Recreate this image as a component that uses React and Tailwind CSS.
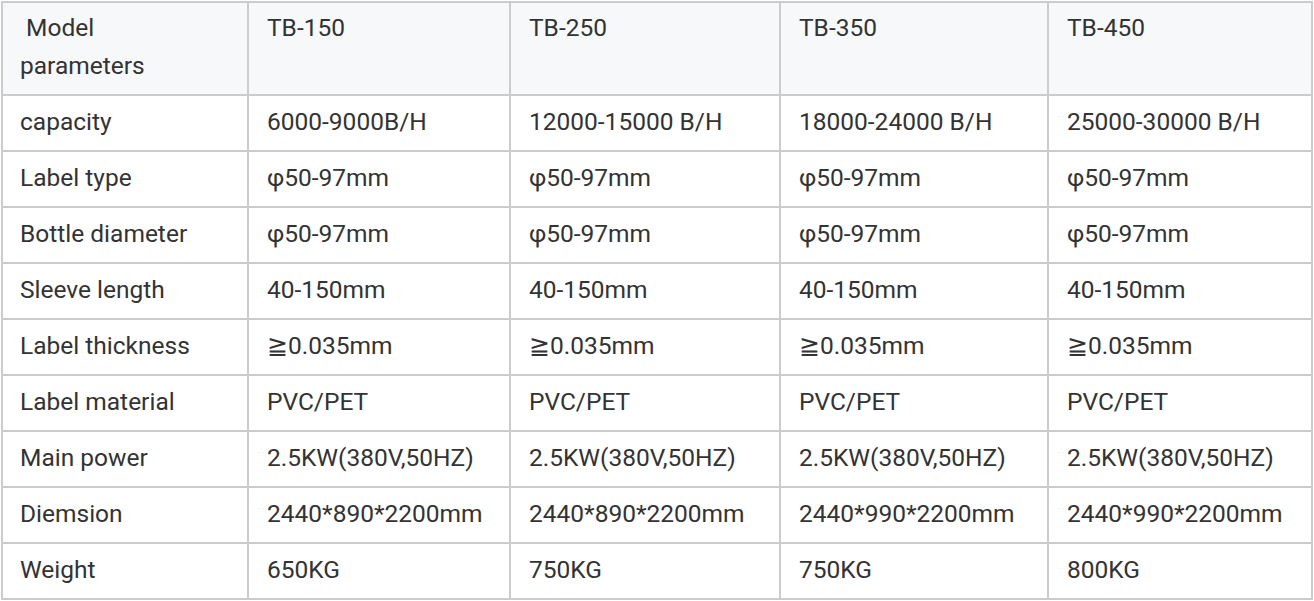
import React from "react";

const models = ["TB-150", "TB-250", "TB-350", "TB-450"];

const rows = [
  ["capacity", "6000-9000B/H", "12000-15000 B/H", "18000-24000 B/H", "25000-30000 B/H"],
  ["Label type", "φ50-97mm", "φ50-97mm", "φ50-97mm", "φ50-97mm"],
  ["Bottle diameter", "φ50-97mm", "φ50-97mm", "φ50-97mm", "φ50-97mm"],
  ["Sleeve length", "40-150mm", "40-150mm", "40-150mm", "40-150mm"],
  ["Label thickness", "≧0.035mm", "≧0.035mm", "≧0.035mm", "≧0.035mm"],
  ["Label material", "PVC/PET", "PVC/PET", "PVC/PET", "PVC/PET"],
  ["Main power", "2.5KW(380V,50HZ)", "2.5KW(380V,50HZ)", "2.5KW(380V,50HZ)", "2.5KW(380V,50HZ)"],
  ["Diemsion", "2440*890*2200mm", "2440*890*2200mm", "2440*990*2200mm", "2440*990*2200mm"],
  ["Weight", "650KG", "750KG", "750KG", "800KG"],
];

const widths = ["w-[244px]", "w-[260px]", "w-[268px]", "w-[266px]", "w-[262px]"];

export default function App() {
  return (
    <div className="bg-white pl-[1px] pt-[1px] font-['Roboto',sans-serif] text-[24.5px] text-[#333]">
      <table className="table-fixed border-separate border-spacing-[2px] bg-[#cccccc] w-[1312px]">
        <thead>
          <tr>
            <th className={`${widths[0]} h-[91px] bg-[#f7f8fa] pl-[17px] pr-2 pt-[6px] align-top text-left font-normal leading-[38px]`}>
              {"\u00a0Model"}
              <br />
              parameters
            </th>
            {models.map((m, i) => (
              <th
                key={m}
                className={`${widths[i + 1]} h-[91px] bg-[#f7f8fa] pl-[18px] pr-2 pt-[6px] align-top text-left font-normal leading-[38px]`}
              >
                {m}
              </th>
            ))}
          </tr>
        </thead>
        <tbody>
          {rows.map((row) => (
            <tr key={row[0]}>
              {row.map((cell, i) => (
                <td
                  key={i}
                  className={`${widths[i]} h-[54px] bg-white ${i === 0 ? "pl-[17px]" : "pl-[18px]"} pr-1 pb-[2px] align-middle leading-[38px] whitespace-nowrap`}
                >
                  {cell}
                </td>
              ))}
            </tr>
          ))}
        </tbody>
      </table>
    </div>
  );
}
